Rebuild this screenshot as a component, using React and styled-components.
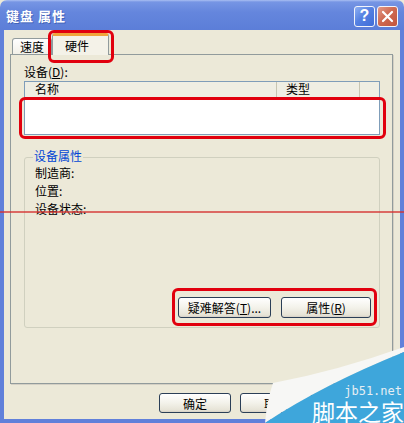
import React from "react";
import styled, { createGlobalStyle } from "styled-components";

const GlobalStyle = createGlobalStyle`
  html, body {
    margin: 0;
    padding: 0;
    background: #ece9d8;
    overflow: hidden;
  }
  body {
    font-family: "Noto Sans CJK SC", "Liberation Sans", sans-serif;
    font-size: 12px;
    color: #000;
  }
`;

const FONT = `"Noto Sans CJK SC", "Liberation Sans", sans-serif`;

const Window = styled.div`
  position: relative;
  width: 404px;
  height: 423px;
  display: flex;
  flex-direction: column;
  overflow: hidden;
  background: #ece9d8;
`;

const TitleBar = styled.div`
  flex: none;
  height: 30px;
  box-sizing: border-box;
  display: flex;
  align-items: center;
  justify-content: space-between;
  padding: 0 6px 0 6px;
  border-radius: 7px 7px 0 0;
  background: linear-gradient(#a9bff2 0, #7695e4 2px, #6586dd 40%, #5c7ed8 100%);
`;

const Title = styled.span`
  color: #fff;
  font-weight: bold;
  font-size: 13px;
  letter-spacing: 1px;
  text-shadow: 1px 1px 0 #4262b8;
`;

const CaptionButtons = styled.div`
  display: flex;
  gap: 2px;
  margin-top: 2px;
`;

const CaptionButton = styled.div`
  width: 21px;
  height: 21px;
  box-sizing: border-box;
  border: 1px solid #f2f4fb;
  border-radius: 3px;
  display: flex;
  align-items: center;
  justify-content: center;
  color: #fff;
  font-family: "Liberation Sans", sans-serif;
  font-weight: bold;
  font-size: 16px;
  background: ${(p) =>
    p.$close
      ? "linear-gradient(135deg, #e39a88 0%, #cf6a52 45%, #c2543c 100%)"
      : "linear-gradient(135deg, #8fb0f2 0%, #5581e2 45%, #3f6cd8 100%)"};
`;

const Frame = styled.div`
  flex: 1;
  display: flex;
  flex-direction: column;
  border: 4px solid #6080da;
  border-top: none;
  padding: 3px 7px 6px 6px;
`;

const TabRow = styled.div`
  flex: none;
  height: 22px;
  display: flex;
  align-items: flex-end;
  padding-left: 2px;
  margin-bottom: -1px;
`;

const Tab = styled.div`
  box-sizing: border-box;
  height: ${(p) => (p.$active ? 22 : 17)}px;
  padding: ${(p) => (p.$active ? "2px 19px 0 12px" : "0 7px")};
  border: 1px solid #919b9c;
  border-bottom: none;
  border-top: ${(p) => (p.$active ? "3px solid #f0a43a" : "1px solid #919b9c")};
  border-radius: 3px 3px 0 0;
  line-height: 15px;
  background: ${(p) => (p.$active ? "#f4f2e8" : "linear-gradient(#fefefe, #f1efe6)")};
  position: ${(p) => (p.$active ? "relative" : "static")};
  z-index: ${(p) => (p.$active ? 1 : "auto")};
`;

const Panel = styled.div`
  flex: 1;
  display: flex;
  flex-direction: column;
  border: 1px solid #919b9c;
  background: #ece9d8;
  padding: 10px 12px 0 13px;
  box-shadow: 1px 1px 0 #d4d0c4;
`;

const FieldLabel = styled.div`
  line-height: 14px;
`;

const ListBox = styled.div`
  margin-top: 2px;
  height: 54px;
  box-sizing: border-box;
  border: 1px solid #7f9db9;
  background: #fff;
`;

const ListHeader = styled.div`
  display: flex;
  height: 15px;
  background: #efeee3;
  border-bottom: 1px solid #d6d2c2;
`;

const HeaderCell = styled.div`
  box-sizing: border-box;
  width: ${(p) => (p.$width ? `${p.$width}px` : "auto")};
  flex: ${(p) => (p.$width ? "none" : 1)};
  padding-left: ${(p) => p.$pad || 0}px;
  line-height: 14px;
  border-right: ${(p) => (p.$width ? "1px solid #c7c5b2" : "none")};
`;

const GroupBox = styled.div`
  margin-top: 22px;
  height: 171px;
  box-sizing: border-box;
  border: 1px solid #d0d0bf;
  border-radius: 3px;
  padding: 0 8px 9px 9px;
  display: flex;
  flex-direction: column;
`;

const Legend = styled.div`
  align-self: flex-start;
  margin: -9px 0 0 -1px;
  padding: 0 1px;
  line-height: 14px;
  color: #0046d5;
  background: #ece9d8;
`;

const InfoList = styled.div`
  margin-top: 1px;
  padding-left: 1px;
`;

const InfoRow = styled.div`
  line-height: 18px;
`;

const ButtonRow = styled.div`
  margin-top: auto;
  display: flex;
  justify-content: flex-end;
  gap: ${(p) => p.$gap || 10}px;
`;

const PushButton = styled.div`
  box-sizing: border-box;
  width: ${(p) => p.$width}px;
  height: ${(p) => p.$height || 21}px;
  border: 1px solid #2b3f57;
  border-radius: 3px;
  background: linear-gradient(#ffffff 0%, #f3f2ea 50%, #e6e3d6 90%, #d6d0c5 100%);
  display: flex;
  align-items: center;
  justify-content: center;
  font-family: ${FONT};
  font-size: 12px;
  white-space: nowrap;
`;

const Footer = styled.div`
  flex: none;
  margin-top: 9px;
  display: flex;
  justify-content: flex-end;
  gap: 9px;
`;

const Mark = styled.div`
  position: absolute;
  left: ${(p) => p.$x}px;
  top: ${(p) => p.$y}px;
  width: ${(p) => p.$w}px;
  height: ${(p) => p.$h}px;
  box-sizing: border-box;
  border: 3px solid #e1000e;
  border-radius: 6px;
  pointer-events: none;
  z-index: 4;
`;

const RedLine = styled.div`
  position: absolute;
  left: 0;
  right: 0;
  top: 211px;
  height: 2px;
  background: rgba(214, 50, 50, 0.7);
  z-index: 4;
`;

const Watermark = styled.div`
  position: absolute;
  right: 0;
  bottom: 0;
  width: 142px;
  height: 78px;
  overflow: hidden;
  z-index: 5;
  display: flex;
  flex-direction: column;
  align-items: flex-end;
  justify-content: flex-end;

  svg {
    position: absolute;
    inset: 0;
  }
`;

const SiteUrl = styled.div`
  position: relative;
  margin-right: 2px;
  font-family: "DejaVu Sans Mono", "Liberation Mono", monospace;
  font-size: 12px;
  line-height: 12px;
  color: #e6eef3;
`;

const SiteName = styled.div`
  position: relative;
  margin: 3px 0 0 0;
  font-size: 23px;
  line-height: 23px;
  color: #fff;
  white-space: nowrap;
`;

export default function App() {
  return (
    <Window>
      <GlobalStyle />
      <TitleBar>
        <Title>键盘 属性</Title>
        <CaptionButtons>
          <CaptionButton>?</CaptionButton>
          <CaptionButton $close>
            <svg width="13" height="13" viewBox="0 0 13 13">
              <path d="M2 2 L11 11 M11 2 L2 11" stroke="#fff" strokeWidth="2.2" strokeLinecap="round" />
            </svg>
          </CaptionButton>
        </CaptionButtons>
      </TitleBar>
      <Frame>
        <TabRow>
          <Tab>速度</Tab>
          <Tab $active>硬件</Tab>
        </TabRow>
        <Panel>
          <FieldLabel>
            设备(<u>D</u>):
          </FieldLabel>
          <ListBox>
            <ListHeader>
              <HeaderCell $width={252} $pad={10}>名称</HeaderCell>
              <HeaderCell $width={83} $pad={9}>类型</HeaderCell>
              <HeaderCell />
            </ListHeader>
          </ListBox>
          <GroupBox>
            <Legend>设备属性</Legend>
            <InfoList>
              <InfoRow>制造商:</InfoRow>
              <InfoRow>位置:</InfoRow>
              <InfoRow>设备状态:</InfoRow>
            </InfoList>
            <ButtonRow>
              <PushButton $width={93}>
                疑难解答(<u>T</u>)...
              </PushButton>
              <PushButton $width={90}>
                属性(<u>R</u>)
              </PushButton>
            </ButtonRow>
          </GroupBox>
        </Panel>
        <Footer>
          <PushButton $width={72} $height={20}>确定</PushButton>
          <PushButton $width={72} $height={20}>取消</PushButton>
          <PushButton $width={72} $height={20}>
            应用(<u>A</u>)
          </PushButton>
        </Footer>
      </Frame>

      <Mark $x={48} $y={30} $w={66} $h={33} />
      <Mark $x={19} $y={97} $w={367} $h={42} />
      <Mark $x={172} $y={288} $w={205} $h={38} />
      <RedLine />

      <Watermark>
        <svg width="142" height="78" viewBox="0 0 142 78">
          <path d="M11 38 Q75 26 142 2 L142 7 Q60 40 3 78 Q5 55 11 38 Z" fill="#f7f7f5" />
          <path d="M142 7 Q60 40 3 78 L142 78 Z" fill="#3ea6db" />
        </svg>
        <SiteUrl>jb51.net</SiteUrl>
        <SiteName>脚本之家</SiteName>
      </Watermark>
    </Window>
  );
}
